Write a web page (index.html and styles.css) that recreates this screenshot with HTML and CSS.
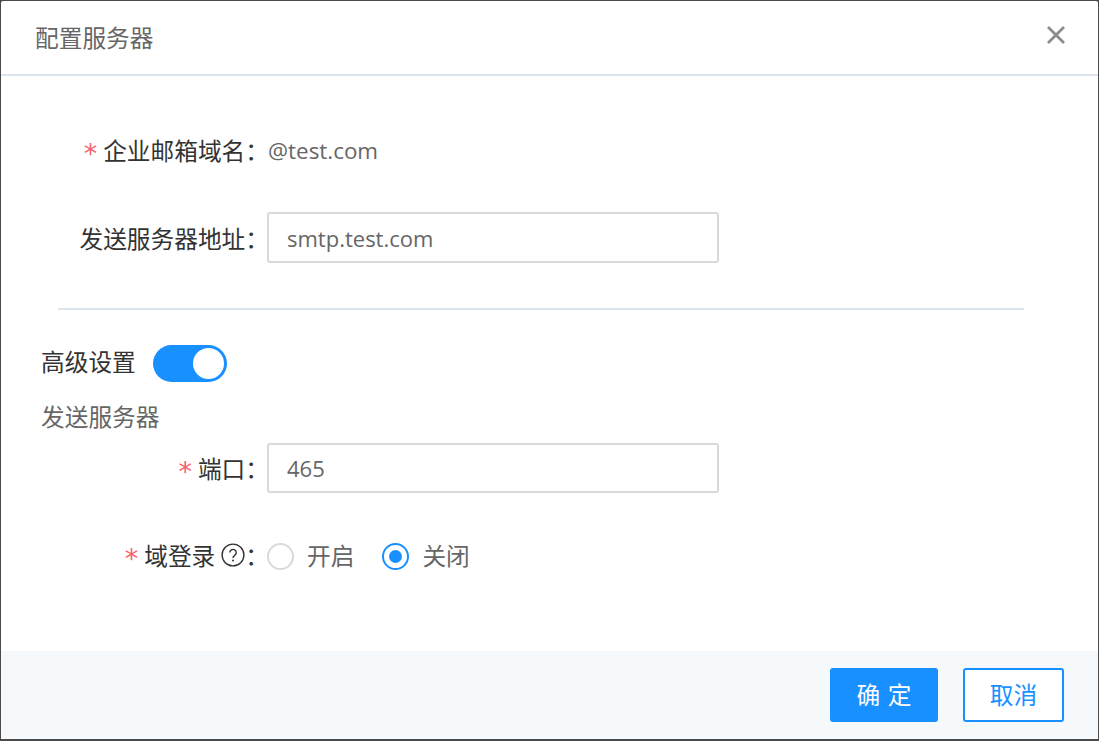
FILE: index.html
```html
<!DOCTYPE html>
<html lang="zh-CN">
<head>
<meta charset="utf-8">
<title>配置服务器</title>
<link rel="stylesheet" href="styles.css">
</head>
<body>
<div class="modal">
  <header class="modal-header">
    <h1 class="modal-title">配置服务器</h1>
    <button class="close" aria-label="关闭">
      <svg width="20" height="20" viewBox="0 0 20 20"><path d="M2 2 18 18M18 2 2 18" stroke="#8c8c8c" stroke-width="2.8" fill="none"/></svg>
    </button>
  </header>
  <main class="modal-body">
    <div class="row row-domain">
      <label class="label"><span class="req">*</span>企业邮箱域名<span class="colon">：</span></label>
      <span class="value">@test.com</span>
    </div>
    <div class="row row-address">
      <label class="label">发送服务器地址<span class="colon">：</span></label>
      <input class="input" value="smtp.test.com">
    </div>
    <div class="divider"></div>
    <div class="advanced">
      <span class="advanced-label">高级设置</span>
      <span class="switch"><span class="knob"></span></span>
    </div>
    <div class="section">发送服务器</div>
    <div class="row row-port">
      <label class="label"><span class="req">*</span>端口<span class="colon">：</span></label>
      <input class="input" value="465">
    </div>
    <div class="row row-login">
      <label class="label"><span class="req">*</span>域登录<svg class="help" width="24" height="24" viewBox="0 0 24 24"><circle cx="12" cy="12" r="10.9" fill="none" stroke="#333" stroke-width="1.4"/><path d="M8.8 9.6a3.2 3.2 0 1 1 4.9 2.7c-1.1.7-1.7 1.2-1.7 2.6" fill="none" stroke="#333" stroke-width="1.4"/><circle cx="12" cy="17.6" r="1" fill="#333"/></svg><span class="colon">：</span></label>
      <div class="radios">
        <span class="radio-item"><span class="radio"></span>开启</span>
        <span class="radio-item"><span class="radio checked"></span>关闭</span>
      </div>
    </div>
  </main>
  <footer class="modal-footer">
    <button class="btn primary">确 定</button>
    <button class="btn outline">取消</button>
  </footer>
</div>
</body>
</html>
```

FILE: styles.css
```css
* { box-sizing: border-box; }
html, body { height: 100%; }
body {
  margin: 0;
  background: #4a4a4a;
  padding: 1px 1px 2px 1px;
  font-family: "Open Sans", "Noto Sans CJK SC", sans-serif;
  font-size: 23.7px;
  color: #333;
  overflow: hidden;
}
.modal {
  height: 738px;
  background: #fff;
  display: flex;
  flex-direction: column;
  border-radius: 2px;
}
.modal-header {
  height: 75px;
  flex: none;
  border-bottom: 2px solid #dce6f0;
  display: flex;
  align-items: center;
  justify-content: space-between;
  padding: 0 32px 1px 34px;
}
.modal-title {
  margin: 0;
  font-size: 23.7px;
  font-weight: 400;
  color: #666;
}
.close {
  border: 0;
  padding: 0;
  background: none;
  display: flex;
  margin-bottom: 5px;
}
.modal-body { flex: 1; padding-top: 45px; }
.row { display: flex; align-items: center; }
.label {
  width: 266px;
  flex: none;
  display: flex;
  align-items: center;
  justify-content: flex-end;
  white-space: nowrap;
  color: #333;
}
.colon { margin-right: -2px; }
.req {
  color: #f7606c;
  margin-right: 6px;
  margin-top: 6px;
  font-family: "DejaVu Sans", sans-serif;
  font-size: 27px;
  line-height: 1;
}
.value { color: #666; font-size: 22.4px; padding-left: 1px; }
.row-domain { height: 58px; }
.row-address { height: 51px; margin-top: 33px; }
.input {
  width: 452px;
  height: 51px;
  border: 2px solid #d9d9d9;
  border-radius: 3px;
  padding: 0 18px;
  font: inherit;
  font-size: 22px;
  color: #666;
  background: #fff;
}
.divider {
  height: 2px;
  margin: 45px 74px 0 57px;
  background: #dce6f0;
}
.advanced {
  display: flex;
  align-items: center;
  margin-top: 34px;
  padding-left: 40px;
  height: 38px;
}
.advanced-label { margin-right: 17px; margin-bottom: 4px; }
.switch {
  width: 74px;
  height: 37px;
  border-radius: 19px;
  background: #1890ff;
  display: flex;
  align-items: center;
  justify-content: flex-end;
  padding-right: 3px;
}
.knob { width: 31px; height: 31px; border-radius: 50%; background: #fff; }
.section { color: #666; padding-left: 40px; margin-top: 16px; height: 38px; line-height: 38px; }
.row-port { height: 50px; margin-top: 7px; }
.row-port .input { height: 50px; }
.row-login { height: 40px; margin-top: 42px; }
.help { margin-left: 6px; }
.radios { display: flex; gap: 28px; color: #666; }
.radio-item { display: flex; align-items: center; }
.radio {
  width: 27px;
  height: 27px;
  border: 2px solid #d9d9d9;
  border-radius: 50%;
  margin-right: 13px;
  margin-top: 2px;
  display: flex;
  align-items: center;
  justify-content: center;
}
.radio.checked { border-color: #1890ff; }
.radio.checked::after {
  content: "";
  width: 13px;
  height: 13px;
  border-radius: 50%;
  background: #1890ff;
}
.modal-footer {
  height: 88px;
  flex: none;
  background: #f5f9fc;
  display: flex;
  justify-content: flex-end;
  align-items: flex-start;
  padding: 17px 34px 0 0;
  gap: 25px;
}
.btn {
  height: 54px;
  border-radius: 3px;
  font: inherit;
  padding: 0 0 3px;
}
.primary { width: 108px; background: #1890ff; color: #fff; border: 0; word-spacing: 1.5px; }
.outline { width: 101px; background: #fff; color: #1890ff; border: 2px solid #1890ff; }
```
